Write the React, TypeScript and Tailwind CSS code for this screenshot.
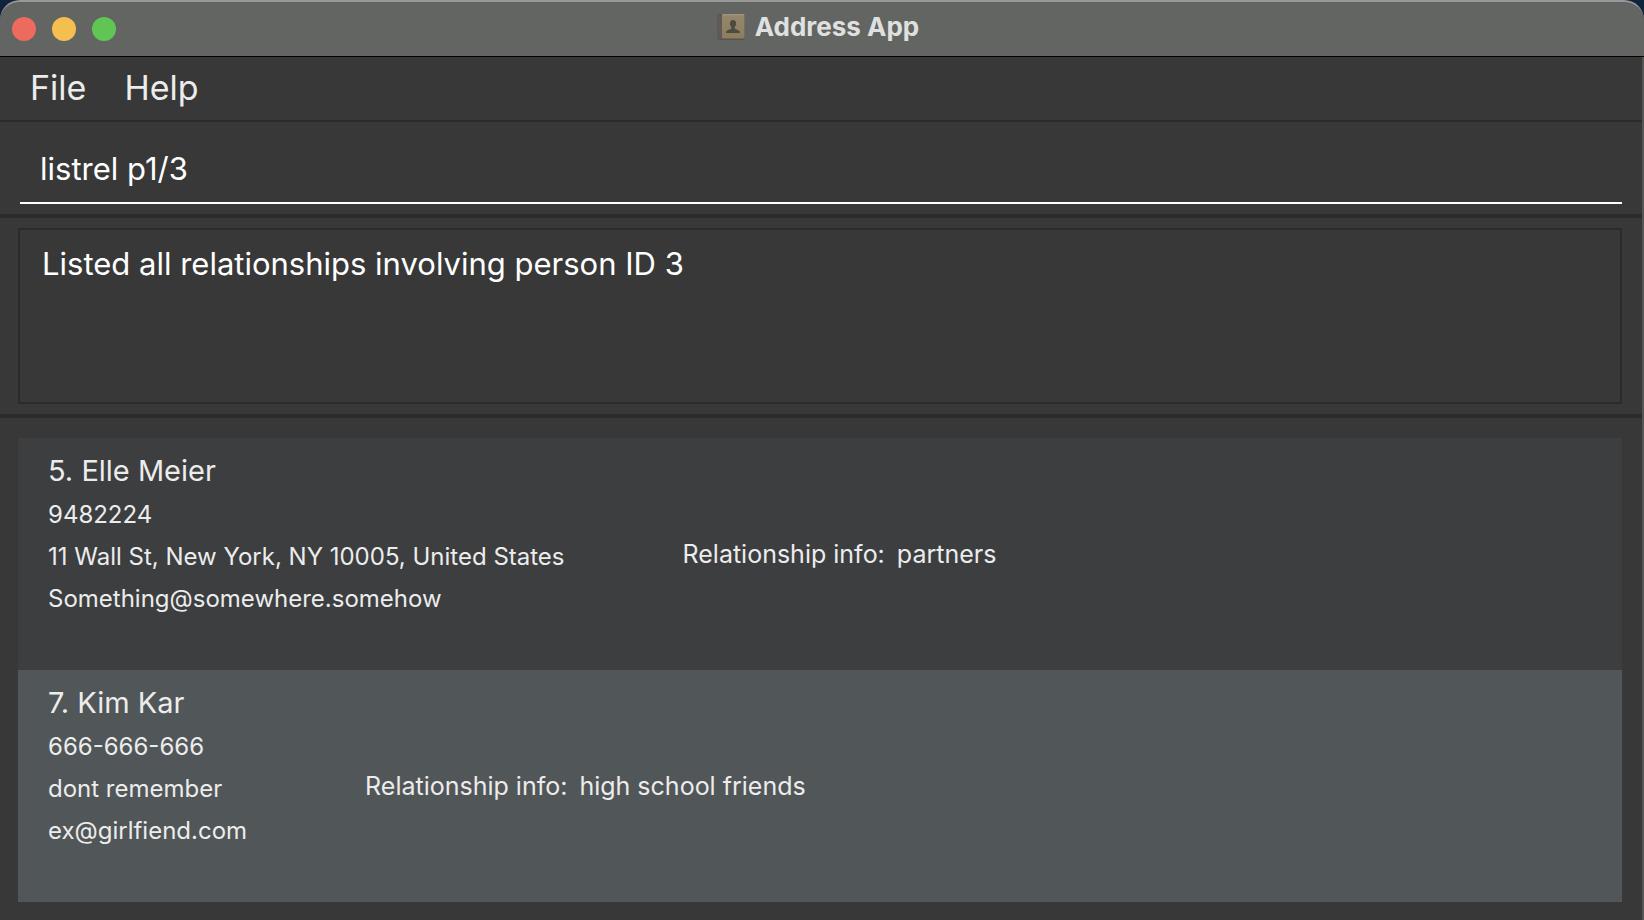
interface Relation {
  id: number;
  name: string;
  phone: string;
  address: string;
  email: string;
  info: string;
}

const relations: Relation[] = [
  {
    id: 5,
    name: "Elle Meier",
    phone: "9482224",
    address: "11 Wall St, New York, NY 10005, United States",
    email: "Something@somewhere.somehow",
    info: "partners",
  },
  {
    id: 7,
    name: "Kim Kar",
    phone: "666-666-666",
    address: "dont remember",
    email: "ex@girlfiend.com",
    info: "high school friends",
  },
];

function BookIcon() {
  return (
    <svg width="28" height="28" viewBox="0 0 28 28" aria-hidden="true">
      <defs>
        <linearGradient id="cover" x1="0" y1="0" x2="0" y2="1">
          <stop offset="0" stopColor="#94886d" />
          <stop offset="1" stopColor="#8d7d5c" />
        </linearGradient>
      </defs>
      <rect x="0.5" y="1" width="27" height="26" rx="1.5" fill="#58534d" />
      <rect x="1" y="1.5" width="4" height="24.5" rx="1" fill="#5f5a55" />
      <rect x="5" y="1" width="22.5" height="24.5" rx="1" fill="url(#cover)" />
      <path d="M5.5 1.800h21.500" stroke="#a39a82" strokeWidth="1" />
      <path
        d="M16 7c-2 0-3.100 1.400-3.100 3.300 0 1.700.6 2.900 1.400 3.700v1.500c-.5 1-4.800 1.100-5.300 3.700V20h14v-.8c-.5-2.600-4.800-2.700-5.300-3.700V14c.8-.8 1.400-2 1.400-3.700C19.100 8.400 18 7 16 7z"
        fill="#4f4a40"
      />
    </svg>
  );
}

function TitleBar() {
  return (
    <header className="grid h-[57px] grid-cols-[1fr_auto_1fr] items-center rounded-t-[20px] border-t-2 border-b border-t-[#979998] border-b-black bg-[#636563] px-3">
      <div className="flex gap-4">
        <button type="button" aria-label="Close" className="size-6 rounded-full bg-[#ed6a5e]" />
        <button type="button" aria-label="Minimize" className="size-6 rounded-full bg-[#f5bf4f]" />
        <button type="button" aria-label="Zoom" className="size-6 rounded-full bg-[#61c554]" />
      </div>
      <h1 className="flex items-center gap-2.5 pr-2 pb-1 text-[26px] leading-8 font-bold text-[#dfe0df]">
        <BookIcon />
        Address App
      </h1>
    </header>
  );
}

function RelationRow({ relation }: { relation: Relation }) {
  return (
    <li className="flex items-start gap-[118px] px-[30px] pt-2.5 pb-[50px] text-[24px] leading-[42px] odd:bg-[#3c3e3f] even:bg-[#515658]">
      <div>
        <h2 className="text-[29px] leading-[46px]">
          {relation.id}. {relation.name}
        </h2>
        <p>{relation.phone}</p>
        <p>{relation.address}</p>
        <p>{relation.email}</p>
      </div>
      <p className="flex gap-3 self-center pt-10 text-[25px]">
        <span>Relationship info:</span>
        <span>{relation.info}</span>
      </p>
    </li>
  );
}

export default function App() {
  return (
    <div className="min-h-screen bg-[#10233c] font-['Inter',sans-serif]">
      <TitleBar />
      <div className="min-h-[calc(100vh-57px)] border-r-2 border-[#555553] bg-[#383838] text-[#ececec]">
        <nav className="flex h-[65px] items-center gap-[38px] border-b-2 border-[#2b2b2b] px-[30px] pb-0.5 text-[34px] leading-10">
          <button type="button">File</button>
          <button type="button">Help</button>
        </nav>
        <form className="border-b-4 border-[#2b2b2b] pt-4 pr-5 pb-2.5 pl-5" onSubmit={(e) => e.preventDefault()}>
          <input
            aria-label="Command"
            defaultValue="listrel p1/3"
            spellCheck={false}
            className="block h-[66px] w-full border-b-2 border-white bg-transparent px-5 pb-1 text-[31px] leading-10 text-white outline-none"
          />
        </form>
        <section className="border-b-4 border-[#2b2b2b] pt-2.5 pr-5 pb-2.5 pl-[18px]">
          <output className="block h-44 border-2 border-[#2b2b2b] px-[22px] py-3.5 text-[31px] leading-10 text-white">
            Listed all relationships involving person ID 3
          </output>
        </section>
        <ul className="py-5 pr-5 pb-[18px] pl-[18px]">
          {relations.map((relation) => (
            <RelationRow key={relation.id} relation={relation} />
          ))}
        </ul>
      </div>
    </div>
  );
}
